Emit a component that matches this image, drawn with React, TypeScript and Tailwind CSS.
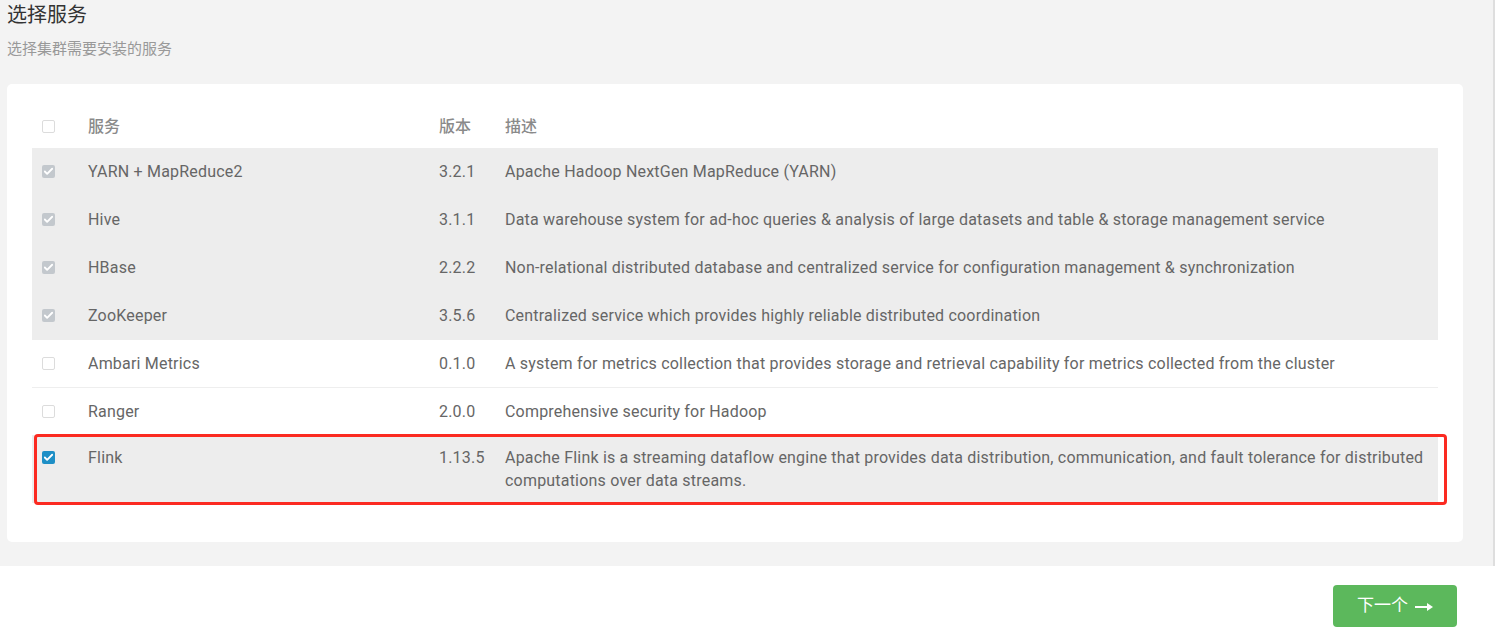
import { Check } from "lucide-react";

type Service = {
  name: string;
  version: string;
  description: string;
  state: "locked" | "off" | "on";
};

const services: Service[] = [
  { name: "YARN + MapReduce2", version: "3.2.1", description: "Apache Hadoop NextGen MapReduce (YARN)", state: "locked" },
  {
    name: "Hive",
    version: "3.1.1",
    description: "Data warehouse system for ad-hoc queries & analysis of large datasets and table & storage management service",
    state: "locked",
  },
  {
    name: "HBase",
    version: "2.2.2",
    description: "Non-relational distributed database and centralized service for configuration management & synchronization",
    state: "locked",
  },
  { name: "ZooKeeper", version: "3.5.6", description: "Centralized service which provides highly reliable distributed coordination", state: "locked" },
  {
    name: "Ambari Metrics",
    version: "0.1.0",
    description: "A system for metrics collection that provides storage and retrieval capability for metrics collected from the cluster",
    state: "off",
  },
  { name: "Ranger", version: "2.0.0", description: "Comprehensive security for Hadoop", state: "off" },
  {
    name: "Flink",
    version: "1.13.5",
    description:
      "Apache Flink is a streaming dataflow engine that provides data distribution, communication, and fault tolerance for distributed computations over data streams.",
    state: "on",
  },
];

function Box({ state }: { state: Service["state"] }) {
  if (state === "off") {
    return <span className="block size-[13px] rounded-[2px] border border-[#dcdcdc] bg-white" />;
  }
  const bg = state === "on" ? "bg-[#1e8fc6]" : "bg-[#c3c8cd]";
  return (
    <span className={`flex size-[13px] items-center justify-center rounded-[2px] ${bg}`}>
      <Check className="size-[11px] text-white" strokeWidth={4} />
    </span>
  );
}

const cols = "grid grid-cols-[56px_351px_66px_1fr]";

export default function App() {
  return (
    <div className="min-h-[633px] bg-white font-['Roboto','Noto_Sans_CJK_SC',sans-serif]">
      <div className="border-r-2 border-[#dedede] bg-[#f3f3f3] pb-6 pl-[7px] pr-[30px]">
        <h1 className="pt-[2px] text-[20px] leading-[26px] text-[#333]">选择服务</h1>
        <p className="mt-[11px] text-[15px] leading-[20px] text-[#999]">选择集群需要安装的服务</p>

        <div className="mt-[25px] rounded-[5px] bg-white px-[25px] pb-[39px] pt-[21px]">
          <div className={`${cols} h-[43px] items-center text-[16px] font-medium text-[#8a8a8a]`}>
            <div className="pl-[10px]">
              <Box state="off" />
            </div>
            <div>服务</div>
            <div>版本</div>
            <div>描述</div>
          </div>

          {services.map((s) => (
            <div
              key={s.name}
              className={`${cols} relative min-h-[48px] content-center border-b py-[10px] text-[16px] leading-[23px] tracking-[0.2px] text-[#666] ${
                s.state === "off" ? "border-[#eeeeee] bg-white" : "border-[#ededed] bg-[#ededed]"
              }`}
            >
              <div className="flex h-[23px] items-center pl-[10px]">
                <Box state={s.state} />
              </div>
              <div>{s.name}</div>
              <div>{s.version}</div>
              <div className="pr-3">{s.description}</div>
              {s.state === "on" && (
                <div className="pointer-events-none absolute -bottom-[3px] -right-[9px] -top-[2px] left-[2px] rounded-[4px] border-[3px] border-[#fb2a21]" />
              )}
            </div>
          ))}
        </div>
      </div>

      <div className="flex justify-end pr-[38px] pt-[19px]">
        <button className="flex h-[42px] w-[124px] items-center justify-center gap-[7px] rounded-[4px] bg-[#5cb85c] text-[17px] text-white">
          <span>下一个</span>
          <svg width="18" height="8" viewBox="0 0 18 8" fill="white" className="mt-[1px]">
            <rect x="0" y="3" width="13" height="2" />
            <path d="M12 0 L18 4 L12 8 Z" />
          </svg>
        </button>
      </div>
    </div>
  );
}
